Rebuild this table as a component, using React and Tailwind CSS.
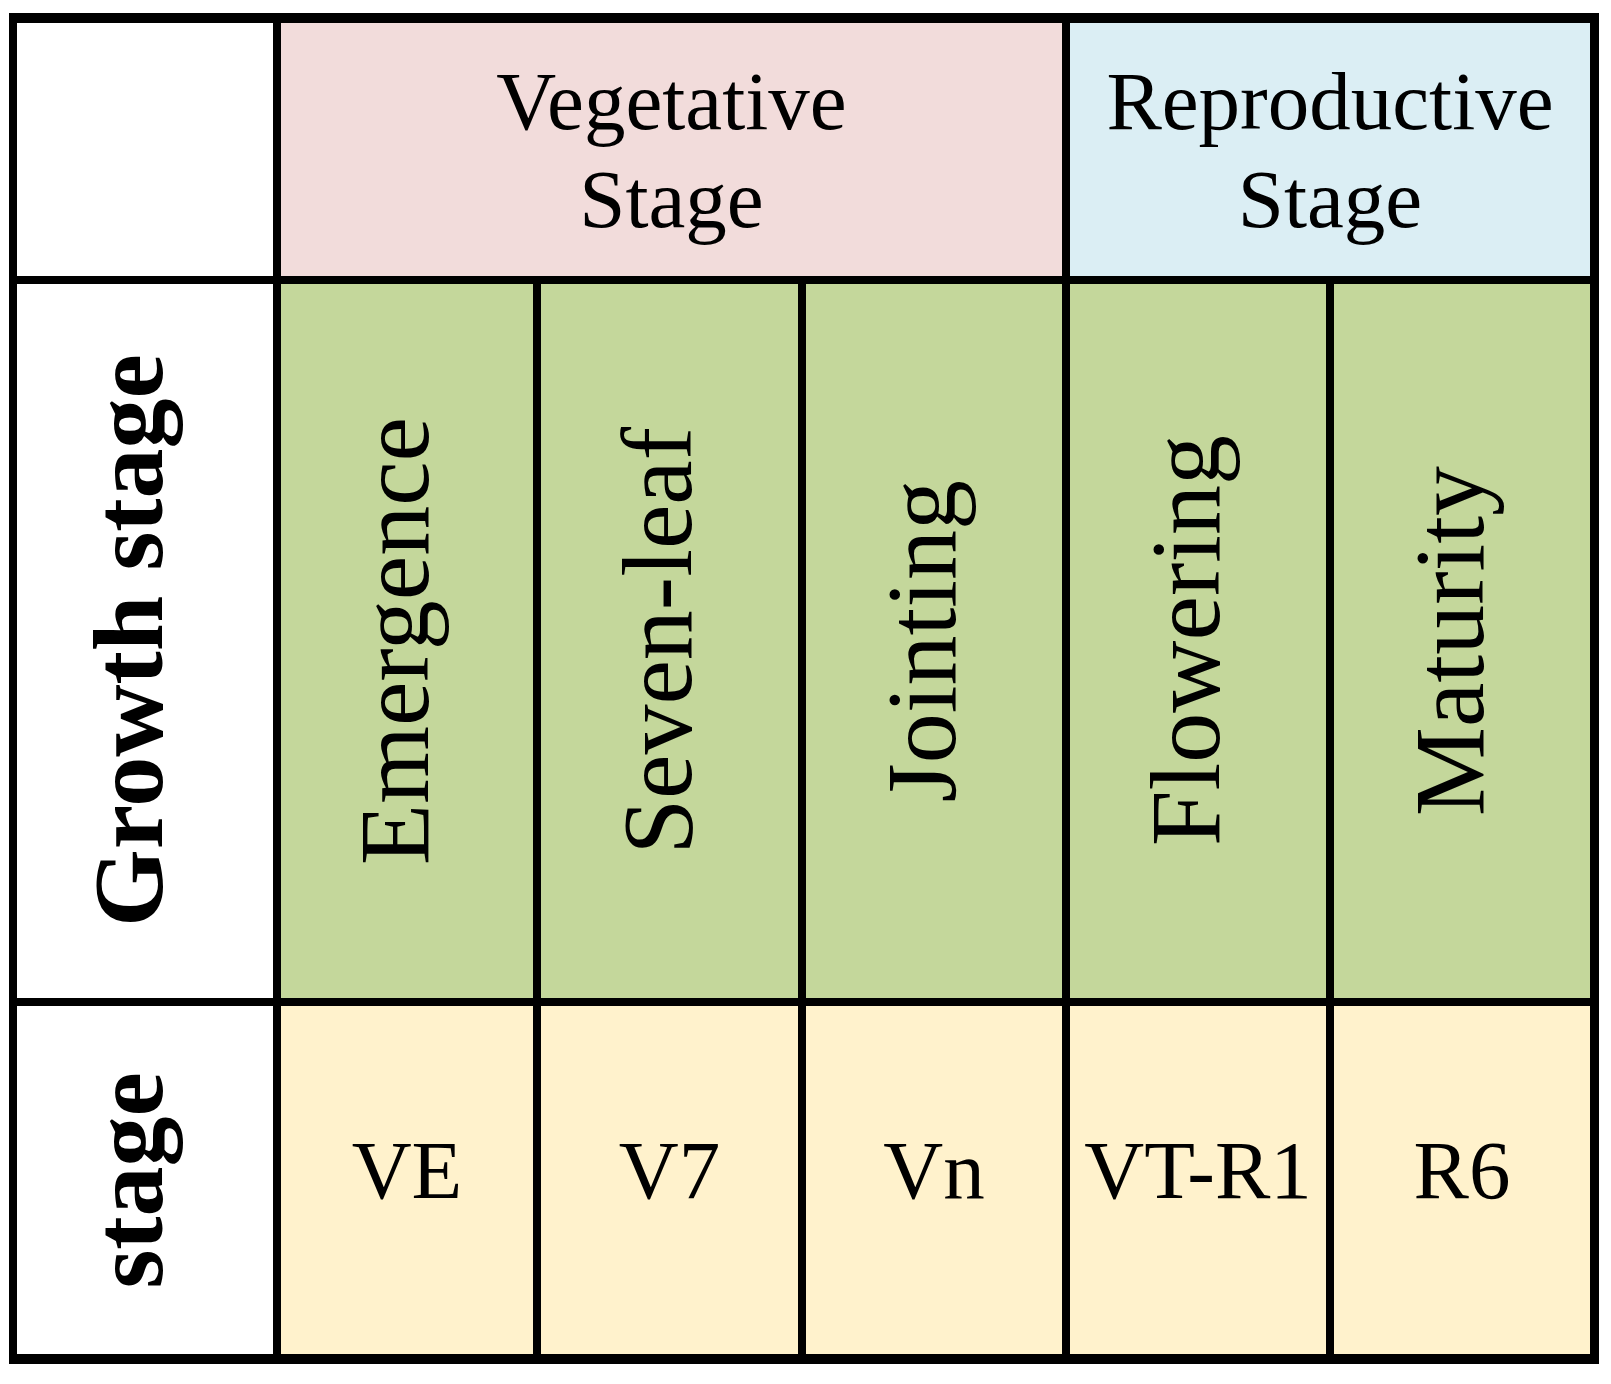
import React from 'react';

const stages = [
    { name: 'Emergence', code: 'VE' },
    { name: 'Seven-leaf', code: 'V7' },
    { name: 'Jointing', code: 'Vn' },
    { name: 'Flowering', code: 'VT-R1' },
    { name: 'Maturity', code: 'R6' },
];

const serif = "font-['Liberation_Serif','Times_New_Roman',serif]";

function App() {
    return (
        <div className={`min-h-screen bg-white pl-[9px] pt-[13px] text-black ${serif}`}>
            <div className="grid w-[1590px] grid-cols-[256px_252px_257px_256px_256px_256px] grid-rows-[253px_714px_348px] gap-[8px] bg-black pb-[10px] pl-[8px] pr-[9px] pt-[10px]">
                {/* header row */}
                <div className="bg-white" />
                <div className="col-span-3 flex items-center justify-center bg-[#f2dcdb] text-center text-[83px] leading-[98px]">
                    Vegetative<br />Stage
                </div>
                <div className="col-span-2 flex items-center justify-center bg-[#dbeef4] text-center text-[83px] leading-[98px]">
                    Reproductive<br />Stage
                </div>

                {/* growth stage names */}
                <div className="flex items-center justify-center bg-white pr-[33px]">
                    <span className="rotate-180 text-[100px] font-bold leading-none [writing-mode:vertical-rl]">Growth stage</span>
                </div>
                {stages.map((s) => (
                    <div key={s.name} className="flex items-center justify-center bg-[#c4d79b] pr-[24px]">
                        <span className="rotate-180 text-[100px] leading-none [writing-mode:vertical-rl]">{s.name}</span>
                    </div>
                ))}

                {/* stage codes */}
                <div className="flex items-center justify-center bg-white pr-[33px]">
                    <span className="rotate-180 text-[100px] font-bold leading-none [writing-mode:vertical-rl]">stage</span>
                </div>
                {stages.map((s) => (
                    <div key={s.code} className="flex items-center justify-center bg-[#fff2cc] pb-[20px]">
                        <span className="text-[83px] leading-none">{s.code}</span>
                    </div>
                ))}
            </div>
        </div>
    );
}

export default App;
